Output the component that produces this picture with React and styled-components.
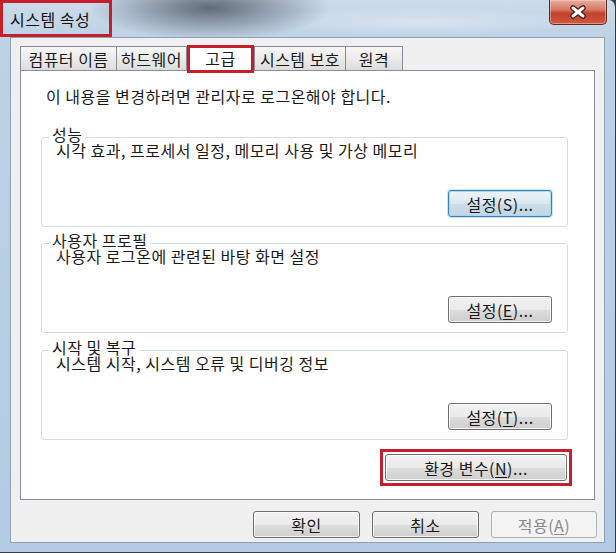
import styled, { createGlobalStyle } from 'styled-components';

const GlobalStyle = createGlobalStyle`
  html, body {
    margin: 0;
    padding: 0;
    background: #34404c;
  }
  body {
    font-family: "Noto Sans CJK KR", "Noto Sans", sans-serif;
    font-size: 16px;
    letter-spacing: 0.5px;
    color: #1a1a1a;
  }
`;

const Window = styled.div`
  width: 616px;
  height: 553px;
  box-sizing: border-box;
  display: flex;
  flex-direction: column;
  border-right: 1px solid #2f3a46;
  border-bottom: 1px solid #2f3a46;
  border-top-right-radius: 7px;
  background:
    radial-gradient(ellipse 120px 32px at 210px 8px, rgba(60, 70, 82, 0.75), rgba(60, 70, 82, 0) 100%),
    radial-gradient(ellipse 160px 14px at 420px 22px, rgba(255, 255, 255, 0.35), rgba(255, 255, 255, 0) 100%),
    linear-gradient(to bottom, #cbdbea 0, #bed2e5 40px, #b2cae2 100%);
`;

const TitleBar = styled.div`
  height: 37px;
  display: flex;
  align-items: flex-start;
`;

// red annotation box around the title
const TitleBox = styled.div`
  width: 112px;
  height: 37px;
  box-sizing: border-box;
  border: 3px solid #c41f2a;
  padding-left: 7px;
  display: flex;
  align-items: center;
  white-space: nowrap;
  color: #111;
`;

const CloseButton = styled.div`
  margin-left: auto;
  margin-right: 8px;
  width: 58px;
  height: 25px;
  box-sizing: border-box;
  border: 1px solid #5e2a22;
  border-top: none;
  border-radius: 0 0 5px 5px;
  background: linear-gradient(to bottom, #e6ada0 0%, #d67a64 40%, #c2412a 55%, #cf5a40 100%);
  box-shadow: inset 0 0 0 1px rgba(255, 220, 210, 0.45);
  display: flex;
  align-items: center;
  justify-content: center;
`;

const Client = styled.div`
  margin: 0 10px 9px 10px;
  height: 506px;
  box-sizing: border-box;
  border: 1px solid #8da2b6;
  background: #f0f0f0;
  padding: 8px 9px 0 9px;
  display: flex;
  flex-direction: column;
`;

const TabStrip = styled.div`
  height: 24px;
  display: flex;
  align-items: flex-end;
  position: relative;
  z-index: 1;
`;

const Tab = styled.div`
  width: ${(p) => p.$w}px;
  height: ${(p) => (p.$active ? 28 : 24)}px;
  box-sizing: border-box;
  margin-left: ${(p) => p.$ml || 0}px;
  margin-bottom: ${(p) => (p.$active ? -3 : 0)}px;
  border: ${(p) => (p.$active ? '3px solid #c41f2a' : '1px solid #898c95')};
  border-bottom: ${(p) => (p.$active ? '3px solid #c41f2a' : 'none')};
  background: ${(p) =>
    p.$active ? '#fff' : 'linear-gradient(to bottom, #f7f7f7 0%, #ebebeb 50%, #dddddd 100%)'};
  display: flex;
  justify-content: center;
  align-items: ${(p) => (p.$active ? 'flex-start' : 'center')};
  padding-top: ${(p) => (p.$active ? 0 : 1)}px;
  line-height: 20px;
  white-space: nowrap;
`;

const Panel = styled.div`
  height: 430px;
  box-sizing: border-box;
  border: 1px solid #898c95;
  background: #fff;
  padding: 15px 26px 0 20px;
  display: flex;
  flex-direction: column;
`;

const Intro = styled.div`
  margin-left: 5px;
  line-height: 20px;
`;

const Group = styled.fieldset`
  margin: ${(p) => p.$mt}px 0 0 0;
  border: 1px solid #d5dde3;
  border-radius: 3px;
  padding: 0 15px 9px 14px;
  min-width: 0;
`;

// extra bottom padding lifts the caption above the frame line
const Legend = styled.legend`
  line-height: 18px;
  padding: 0 3px 6px 3px;
  margin-left: -7px;
`;

const Desc = styled.div`
  margin-top: -7px;
  line-height: 17px;
`;

const ButtonRow = styled.div`
  display: flex;
  justify-content: flex-end;
  gap: ${(p) => p.$gap || 0}px;
  margin-top: ${(p) => p.$mt || 0}px;
  margin-right: ${(p) => p.$mr || 0}px;
`;

// red annotation frame (square corners)
const Highlight = styled.div`
  display: flex;
  border: 3px solid #c41f2a;
  padding: 2px;
`;

const Button = styled.div`
  width: ${(p) => p.$w}px;
  height: ${(p) => p.$h || 27}px;
  box-sizing: border-box;
  border: 1px solid #707070;
  border-radius: 3px;
  background: linear-gradient(to bottom, #f2f2f2 0%, #ebebeb 50%, #dddddd 51%, #cfcfcf 100%);
  box-shadow: inset 0 0 0 1px rgba(255, 255, 255, 0.75);
  display: flex;
  align-items: center;
  justify-content: center;
  white-space: nowrap;
  color: #1a1a1a;

  u {
    text-underline-offset: 2px;
  }

  ${(p) =>
    p.$focused &&
    `
    border-color: #3c7fb1;
    background: linear-gradient(to bottom, #eaf3f9 0%, #dde9f1 50%, #cddde9 51%, #c2d6e4 100%);
    box-shadow: inset 0 0 0 1px #a8d8f0, 0 0 0 1px rgba(120, 180, 220, 0.35);
  `}

  ${(p) =>
    p.$disabled &&
    `
    border-color: #adb2b5;
    background: #f4f4f4;
    box-shadow: none;
    color: #8a8a8a;
  `}
`;

function CloseIcon() {
  return (
    <svg width="18" height="14" viewBox="-9 -7 18 14">
      <g strokeLinecap="round">
        <path d="M-5 -4 L5 4 M5 -4 L-5 4" stroke="#4d1a12" strokeWidth="5.5" />
        <path d="M-5 -4 L5 4 M5 -4 L-5 4" stroke="#fff" strokeWidth="3" />
      </g>
    </svg>
  );
}

const groups = [
  { title: '성능', desc: '시각 효과, 프로세서 일정, 메모리 사용 및 가상 메모리', key: 'S', focused: true, mt: 19 },
  { title: '사용자 프로필', desc: '사용자 로그온에 관련된 바탕 화면 설정', key: 'E', mt: 4 },
  { title: '시작 및 복구', desc: '시스템 시작, 시스템 오류 및 디버깅 정보', key: 'T', mt: 5 },
];

export default function App() {
  return (
    <>
      <GlobalStyle />
      <Window>
        <TitleBar>
          <TitleBox>시스템 속성</TitleBox>
          <CloseButton>
            <CloseIcon />
          </CloseButton>
        </TitleBar>
        <Client>
          <TabStrip>
            <Tab $w={97}>컴퓨터 이름</Tab>
            <Tab $w={71} $ml={-1}>하드웨어</Tab>
            <Tab $w={67} $active>고급</Tab>
            <Tab $w={92}>시스템 보호</Tab>
            <Tab $w={58} $ml={-1}>원격</Tab>
          </TabStrip>
          <Panel>
            <Intro>이 내용을 변경하려면 관리자로 로그온해야 합니다.</Intro>
            {groups.map((g) => (
              <Group key={g.key} $mt={g.mt}>
                <Legend>{g.title}</Legend>
                <Desc>{g.desc}</Desc>
                <ButtonRow $mt={31}>
                  <Button $w={104} $focused={g.focused}>
                    설정({g.focused ? g.key : <u>{g.key}</u>})...
                  </Button>
                </ButtonRow>
              </Group>
            ))}
            <ButtonRow $mt={9} $mr={-4}>
              <Highlight>
                <Button $w={182}>
                  환경 변수(<u>N</u>)...
                </Button>
              </Highlight>
            </ButtonRow>
          </Panel>
          <ButtonRow $mt={11} $gap={12} $mr={-2}>
            <Button $w={107}>확인</Button>
            <Button $w={107}>취소</Button>
            <Button $w={106} $disabled>
              적용(<u>A</u>)
            </Button>
          </ButtonRow>
        </Client>
      </Window>
    </>
  );
}
